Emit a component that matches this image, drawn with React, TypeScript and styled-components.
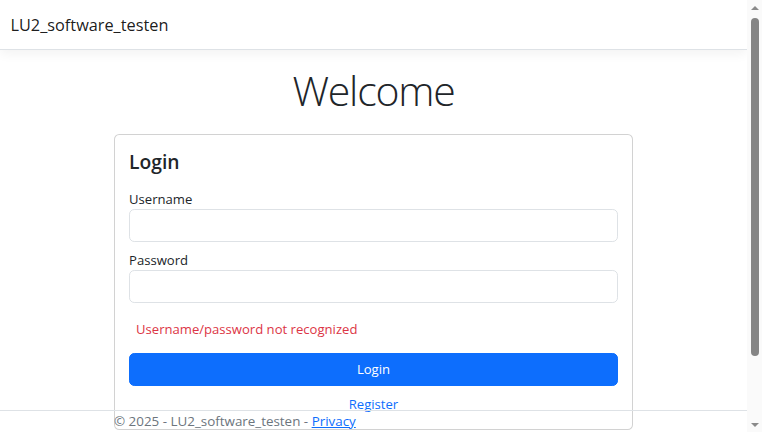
import React from "react";
import styled, { createGlobalStyle } from "styled-components";

const FONT = `"Open Sans", "Noto Sans", "Liberation Sans", sans-serif`;

const GlobalStyle = createGlobalStyle`
  html {
    position: relative;
    height: 100%;
    font-size: 13.1px;
  }
  body {
    margin: 0 15px 60px 0;
    font-family: ${FONT};
    font-size: 13.1px;
    line-height: 1.5;
    color: #212529;
    background: #fff;
  }
  * { box-sizing: border-box; }
`;

const Navbar = styled.header`
  display: flex;
  align-items: center;
  height: 50px;
  padding: 0 10.5px;
  border-bottom: 1px solid #dee2e6;
  box-shadow: 0 3.5px 10.5px rgba(0, 0, 0, 0.05);
  margin-bottom: 14px;
`;

const Brand = styled.a`
  font-size: 16.3px;
  line-height: 26px;
  color: rgba(0, 0, 0, 0.9);
  text-decoration: none;
`;

const Main = styled.main`
  max-width: 720px;
  margin: 0 auto;
  padding: 0 10.5px 14px;
`;

const Title = styled.h1`
  margin: 0 0 17px;
  height: 53px;
  text-align: center;
  font-size: 41px;
  font-weight: 300;
  letter-spacing: -1.2px;
  line-height: 53px;
`;

const Card = styled.section`
  width: 519px;
  margin: 0 auto;
  border: 1px solid rgba(0, 0, 0, 0.175);
  border-radius: 5.25px;
  background: #fff;
`;

const CardBody = styled.form`
  display: flex;
  flex-direction: column;
  padding: 14px;
`;

const CardTitle = styled.h5`
  margin: 0 0 18.5px;
  height: 21px;
  font-size: 19.3px;
  font-weight: 600;
  line-height: 25px;
`;

const Field = styled.div<{ $gap?: number }>`
  display: flex;
  flex-direction: column;
  margin-bottom: ${(p) => p.$gap ?? 0}px;
`;

const Label = styled.label`
  line-height: 21px;
  height: 20.5px;
`;

const Input = styled.input`
  display: block;
  width: 100%;
  height: 33px;
  padding: 5.25px 10.5px;
  font-family: ${FONT};
  font-size: 13.1px;
  color: #212529;
  border: 1px solid #dee2e6;
  border-radius: 5.25px;
  background: #fff;
  outline: none;
`;

const ErrorText = styled.div`
  padding-left: 7px;
  margin-bottom: 13px;
  color: #dc3545;
  line-height: 21px;
`;

const Button = styled.button`
  height: 33px;
  width: 100%;
  border: 1px solid #0d6efd;
  border-radius: 5.25px;
  background: #0d6efd;
  color: #fff;
  font-family: ${FONT};
  font-size: 13.1px;
  cursor: pointer;
  margin-bottom: 8px;
`;

const CenterLink = styled.a`
  align-self: center;
  color: #0d6efd;
  text-decoration: none;
  line-height: 21px;
`;

const Footer = styled.footer`
  position: absolute;
  bottom: 0;
  left: 0;
  right: 15px;
  border-top: 1px solid #dee2e6;
  font-size: 13.4px;
  line-height: 21px;
  white-space: nowrap;
  color: #6c757d;
`;

const FooterInner = styled.div`
  width: 519px;
  margin: 0 auto;
`;

const FooterLink = styled.a`
  color: #0d6efd;
  text-decoration: underline;
`;

/* Browser scrollbar, drawn over the right edge */
const ScrollBar = styled.div`
  position: fixed;
  top: 0;
  right: 0;
  bottom: 0;
  width: 15px;
  display: flex;
  flex-direction: column;
  align-items: center;
  background: #fafafa;
`;

const Arrow = styled.div<{ $down?: boolean }>`
  flex: none;
  height: 15px;
  display: flex;
  align-items: center;
  justify-content: center;
  &::before {
    content: "";
    width: 0;
    height: 0;
    border-left: 4px solid transparent;
    border-right: 4px solid transparent;
    ${(p) =>
      p.$down
        ? "border-top: 4px solid #8a8a8a;"
        : "border-bottom: 4px solid #8a8a8a;"}
  }
`;

const Track = styled.div`
  flex: 1;
  width: 100%;
  display: flex;
  justify-content: center;
  padding-top: 3px;
`;

const Thumb = styled.div`
  width: 8px;
  height: 338px;
  border-radius: 4px;
  background: #858585;
`;

export default function App() {
  return (
    <>
      <GlobalStyle />
      <Navbar>
        <Brand href="#">LU2_software_testen</Brand>
      </Navbar>
      <Main>
        <Title>Welcome</Title>
        <Card>
          <CardBody onSubmit={(e) => e.preventDefault()}>
            <CardTitle>Login</CardTitle>
            <Field $gap={7.5}>
              <Label htmlFor="username">Username</Label>
              <Input id="username" type="text" />
            </Field>
            <Field $gap={15.5}>
              <Label htmlFor="password">Password</Label>
              <Input id="password" type="password" />
            </Field>
            <ErrorText>Username/password not recognized</ErrorText>
            <Button type="submit">Login</Button>
            <CenterLink href="#">Register</CenterLink>
          </CardBody>
        </Card>
      </Main>
      <Footer>
        <FooterInner>
          © 2025 - LU2_software_testen - <FooterLink href="#">Privacy</FooterLink>
        </FooterInner>
      </Footer>
      <ScrollBar aria-hidden="true">
        <Arrow />
        <Track>
          <Thumb />
        </Track>
        <Arrow $down />
      </ScrollBar>
    </>
  );
}
